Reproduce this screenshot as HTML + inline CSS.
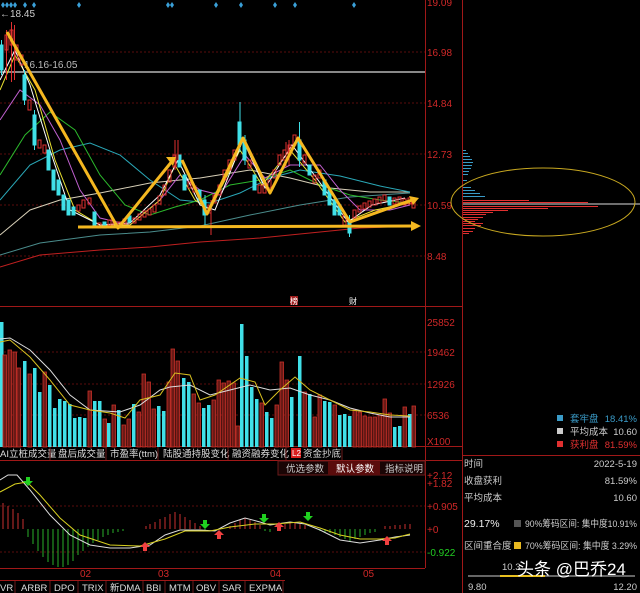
<!DOCTYPE html>
<html><head><meta charset="utf-8"><style>
html,body{margin:0;padding:0;background:#000;width:640px;height:593px;overflow:hidden}
svg{display:block}
text{font-family:"Liberation Sans","Noto Sans CJK SC",sans-serif}
</style></head><body>
<svg width="640" height="593" viewBox="0 0 640 593" xmlns="http://www.w3.org/2000/svg">
<rect width="640" height="593" fill="#000"/>
<g stroke="#5a0d0d" stroke-width="1" stroke-dasharray="2,2">
<line x1="0" y1="52" x2="425" y2="52"/><line x1="0" y1="103" x2="425" y2="103"/><line x1="0" y1="154" x2="425" y2="154"/><line x1="0" y1="205" x2="425" y2="205"/><line x1="0" y1="256" x2="425" y2="256"/>
<line x1="0" y1="352" x2="425" y2="352"/><line x1="0" y1="384" x2="425" y2="384"/><line x1="0" y1="415" x2="425" y2="415"/>
<line x1="0" y1="506" x2="425" y2="506"/><line x1="0" y1="552" x2="425" y2="552"/>
</g>
<g stroke="#a01818" stroke-width="1">
<line x1="425.5" y1="0" x2="425.5" y2="568"/>
<line x1="462.5" y1="0" x2="462.5" y2="593"/>
<line x1="0" y1="306.5" x2="462" y2="306.5"/>
<line x1="0" y1="446.5" x2="462" y2="446.5"/>
<line x1="0" y1="460.5" x2="462" y2="460.5"/>
<line x1="0" y1="568.5" x2="425" y2="568.5"/>
<line x1="0" y1="580.5" x2="285" y2="580.5"/>
<line x1="462" y1="455.5" x2="640" y2="455.5"/>
</g>
<line x1="0" y1="72" x2="425" y2="72" stroke="#888" stroke-width="2"/>
<g fill="#d02828" font-size="10">
<text x="427" y="6">19.09</text><text x="427" y="56">16.98</text><text x="427" y="107">14.84</text><text x="427" y="158">12.73</text><text x="427" y="209">10.59</text><text x="427" y="260">8.48</text>
<text x="427" y="326">25852</text><text x="427" y="356">19462</text><text x="427" y="388">12926</text><text x="427" y="419">6536</text><text x="427" y="445">X100</text>
<text x="427" y="479">+2.12</text><text x="427" y="487">+1.82</text><text x="427" y="510">+0.905</text><text x="427" y="533">+0</text>
</g>
<text x="427" y="556" fill="#2c2" font-size="10">-0.922</text>
<g fill="#d02828" font-size="10"><text x="80" y="577">02</text><text x="158" y="577">03</text><text x="270" y="577">04</text><text x="363" y="577">05</text></g>
<text x="0" y="17" fill="#ccc" font-size="10">←18.45</text>
<text x="24" y="68" fill="#bbb" font-size="10" font-family="Liberation Mono">16.16-16.05</text>
<g fill="#3aa0d8">
<path d="M3 2l2 3-2 3-2-3z M7 2l2 3-2 3-2-3z M11 2l2 3-2 3-2-3z M15 2l2 3-2 3-2-3z M25 2l2 3-2 3-2-3z M34 2l2 3-2 3-2-3z M79 2l2 3-2 3-2-3z M168 2l2 3-2 3-2-3z M172 2l2 3-2 3-2-3z M216 2l2 3-2 3-2-3z M241 2l2 3-2 3-2-3z M275 2l2 3-2 3-2-3z M295 2l2 3-2 3-2-3z M354 2l2 3-2 3-2-3z"/>
</g>
<g fill="none" stroke-width="1">
<polyline stroke="#c02020" points="0,267 40,255 100,250 150,247 200,242 260,238 320,232 360,228 415,226"/>
<polyline stroke="#4a8c8c" points="0,255 40,243 100,235 150,232 200,226 250,215 300,205 350,197 410,193"/>
<polyline stroke="#d8d0b8" points="0,235 30,210 60,200 100,193 150,183 200,178 250,170 290,178 330,188 370,192 410,192"/>
<polyline stroke="#2aa8b8" points="0,200 30,165 60,150 90,143 120,155 150,180 180,200 210,203 240,193 270,178 300,170 340,176 380,186 410,192"/>
<polyline stroke="#2cb82c" points="0,175 25,135 50,112 75,130 100,175 125,205 150,215 175,207 200,200 230,185 260,180 290,170 320,185 350,195 380,200 410,203"/>
<polyline stroke="#c060d0" points="0,120 20,90 40,105 60,140 80,190 100,218 130,225 160,200 180,175 200,190 220,195 245,155 265,178 290,165 320,165 340,190 360,210 390,210 410,205"/>
<polyline stroke="#e8e030" points="0,90 15,55 35,90 55,160 75,210 100,225 130,225 160,200 175,165 195,200 210,210 240,150 262,185 290,150 315,180 345,222 375,210 410,203"/>
<polyline stroke="#fff" points="0,80 15,50 30,85 50,150 70,210 100,225 130,223 160,195 178,160 200,205 215,210 243,140 265,188 292,145 318,180 348,222 372,205 405,198"/>
</g>
<g stroke-width="1">
<g fill="#40e0e8" stroke="#40e0e8">
<rect x="0" y="45" width="3" height="25"/><rect x="23" y="75" width="3" height="25"/><rect x="33" y="115" width="3" height="30"/><rect x="47" y="150" width="3" height="20"/><rect x="52" y="170" width="3" height="20"/><rect x="57" y="180" width="3" height="15"/><rect x="62" y="195" width="3" height="15"/><rect x="67" y="200" width="3" height="15"/><rect x="72" y="207" width="3" height="8"/><rect x="93" y="212" width="3" height="13"/><rect x="103" y="222" width="3" height="6"/><rect x="128" y="216" width="3" height="6"/><rect x="178" y="155" width="3" height="12"/><rect x="183" y="175" width="3" height="15"/><rect x="198" y="190" width="3" height="10"/><rect x="203" y="200" width="3" height="15"/><rect x="238" y="122" width="3" height="23"/><rect x="243" y="140" width="3" height="20"/><rect x="253" y="175" width="3" height="15"/><rect x="298" y="140" width="3" height="20"/><rect x="308" y="165" width="3" height="10"/><rect x="323" y="180" width="3" height="15"/><rect x="328" y="190" width="3" height="15"/><rect x="333" y="200" width="3" height="15"/><rect x="338" y="205" width="3" height="10"/><rect x="348" y="222" width="3" height="11"/><rect x="388" y="197" width="3" height="8"/>
</g>
<g stroke="#40e0e8"><path d="M1.5 40v35M24.5 70v35M34.5 110v40M240 102v50M245 135v30M299.5 122v45M349.5 215v22M205 195v30"/></g>
<g fill="none" stroke="#e03030">
<rect x="5" y="35" width="3" height="15"/><rect x="10" y="30" width="3" height="15"/><rect x="15" y="45" width="3" height="15"/><rect x="20" y="55" width="3" height="10"/><rect x="28" y="100" width="3" height="10"/><rect x="38" y="140" width="3" height="8"/><rect x="43" y="145" width="3" height="8"/><rect x="77" y="205" width="3" height="6"/><rect x="82" y="200" width="3" height="8"/><rect x="88" y="198" width="3" height="6"/><rect x="98" y="223" width="3" height="5"/><rect x="108" y="220" width="3" height="5"/><rect x="113" y="222" width="3" height="5"/><rect x="118" y="222" width="3" height="5"/><rect x="123" y="219" width="3" height="5"/><rect x="133" y="218" width="3" height="5"/><rect x="138" y="214" width="3" height="6"/><rect x="143" y="211" width="3" height="6"/><rect x="148" y="209" width="3" height="6"/><rect x="153" y="205" width="3" height="7"/><rect x="158" y="196" width="3" height="8"/><rect x="163" y="185" width="3" height="10"/><rect x="168" y="170" width="3" height="12"/><rect x="173" y="155" width="3" height="12"/><rect x="188" y="182" width="3" height="6"/><rect x="193" y="186" width="3" height="6"/><rect x="208" y="205" width="3" height="8"/><rect x="213" y="195" width="3" height="8"/><rect x="218" y="185" width="3" height="10"/><rect x="223" y="170" width="3" height="10"/><rect x="228" y="160" width="3" height="10"/><rect x="233" y="150" width="3" height="10"/><rect x="248" y="160" width="3" height="8"/><rect x="258" y="185" width="3" height="8"/><rect x="263" y="185" width="3" height="8"/><rect x="268" y="180" width="3" height="8"/><rect x="273" y="170" width="3" height="8"/><rect x="278" y="155" width="3" height="10"/><rect x="283" y="150" width="3" height="10"/><rect x="288" y="145" width="3" height="10"/><rect x="293" y="135" width="3" height="10"/><rect x="303" y="155" width="3" height="8"/><rect x="313" y="175" width="3" height="8"/><rect x="318" y="170" width="3" height="8"/><rect x="343" y="215" width="3" height="10"/><rect x="353" y="210" width="3" height="8"/><rect x="358" y="206" width="3" height="6"/><rect x="363" y="203" width="3" height="6"/><rect x="368" y="201" width="3" height="6"/><rect x="373" y="199" width="3" height="6"/><rect x="378" y="197" width="3" height="6"/><rect x="383" y="195" width="3" height="6"/><rect x="393" y="198" width="3" height="6"/><rect x="398" y="197" width="3" height="6"/><rect x="403" y="199" width="3" height="6"/><rect x="408" y="198" width="3" height="6"/><rect x="412" y="202" width="3" height="6"/>
</g>
<g stroke="#e03030"><path d="M11.5 22v60M14.5 25v55M6.5 30v50M175 140v30M178 140v20M286 142v25M289 140v25M211 200v35"/></g>
</g>
<g fill="none" stroke="#f5b820" stroke-width="3" stroke-linejoin="round">
<polyline points="7,32 118,228 173,160"/>
<polyline points="182,160 207,214 243,138 270,193 298,138 350,222 412,200"/>
<line x1="78" y1="227" x2="415" y2="226"/>
</g>
<g fill="#f5b820"><path d="M176,157 l-10,0 l7,9z M421,226 l-10,-5 l0,10z M419,198 l-10,-2 l4,9z"/></g>
<rect x="290" y="296" width="8" height="9" fill="#a02020"/><text x="290" y="304" fill="#fff" font-size="8">榜</text>
<text x="349" y="304" fill="#fff" font-size="8">财</text>
<g fill="#3a9bc8">
<rect x="463" y="150" width="3" height="1"/><rect x="463" y="153" width="5" height="1"/><rect x="463" y="156" width="7" height="1"/><rect x="463" y="159" width="9" height="1"/><rect x="463" y="162" width="10" height="1"/><rect x="463" y="165" width="9" height="1"/><rect x="463" y="168" width="8" height="1"/><rect x="463" y="171" width="6" height="1"/><rect x="463" y="174" width="5" height="1"/><rect x="463" y="180" width="4" height="1"/><rect x="463" y="187" width="8" height="1"/><rect x="463" y="190" width="12" height="1"/><rect x="463" y="193" width="17" height="1"/><rect x="463" y="196" width="22" height="1"/>
</g>
<g fill="#e03030">
<rect x="463" y="200" width="66" height="1"/><rect x="463" y="202" width="125" height="1"/><rect x="463" y="206" width="135" height="1"/><rect x="463" y="208" width="85" height="1"/><rect x="463" y="210" width="45" height="1"/><rect x="463" y="212" width="30" height="1"/><rect x="463" y="214" width="23" height="1"/><rect x="463" y="217" width="20" height="1"/><rect x="463" y="219" width="15" height="1"/><rect x="463" y="221" width="12" height="1"/><rect x="463" y="223" width="20" height="1"/><rect x="463" y="225" width="18" height="1"/><rect x="463" y="228" width="12" height="1"/><rect x="463" y="231" width="10" height="1"/><rect x="463" y="233" width="6" height="1"/>
</g>
<line x1="463" y1="204" x2="640" y2="204" stroke="#ddd" stroke-width="1"/>
<ellipse cx="543" cy="202" rx="92" ry="34" fill="none" stroke="#c8a820" stroke-width="1"/>
<g fill="#40e0e8">
<rect x="0" y="322" width="3.5" height="125"/><rect x="23" y="361" width="3.5" height="86"/><rect x="33" y="368" width="3.5" height="79"/><rect x="38" y="392" width="3.5" height="55"/><rect x="48" y="385" width="3.5" height="62"/><rect x="53" y="408" width="3.5" height="39"/><rect x="58" y="399" width="3.5" height="48"/><rect x="63" y="401" width="3.5" height="46"/><rect x="68" y="404" width="3.5" height="43"/><rect x="73" y="418" width="3.5" height="29"/><rect x="78" y="417" width="3.5" height="30"/><rect x="83" y="418" width="3.5" height="29"/><rect x="93" y="401" width="3.5" height="46"/><rect x="98" y="401" width="3.5" height="46"/><rect x="107" y="423" width="3.5" height="24"/><rect x="117" y="410" width="3.5" height="37"/><rect x="132" y="404" width="3.5" height="43"/><rect x="157" y="406" width="3.5" height="41"/><rect x="162" y="411" width="3.5" height="36"/><rect x="182" y="378" width="3.5" height="69"/><rect x="187" y="382" width="3.5" height="65"/><rect x="202" y="408" width="3.5" height="39"/><rect x="207" y="405" width="3.5" height="42"/><rect x="240" y="324" width="3.5" height="123"/><rect x="245" y="356" width="3.5" height="91"/><rect x="250" y="387" width="3.5" height="60"/><rect x="255" y="399" width="3.5" height="48"/><rect x="265" y="412" width="3.5" height="35"/><rect x="270" y="418" width="3.5" height="29"/><rect x="290" y="397" width="3.5" height="50"/><rect x="298" y="356" width="3.5" height="91"/><rect x="308" y="394" width="3.5" height="53"/><rect x="323" y="401" width="3.5" height="46"/><rect x="328" y="402" width="3.5" height="45"/><rect x="338" y="415" width="3.5" height="32"/><rect x="343" y="414" width="3.5" height="33"/><rect x="348" y="416" width="3.5" height="31"/><rect x="393" y="427" width="3.5" height="20"/><rect x="398" y="426" width="3.5" height="21"/><rect x="408" y="414" width="3.5" height="33"/>
</g>
<g fill="#6a1a16" stroke="#c83028" stroke-width="0.8">
<rect x="3" y="355" width="3.5" height="92"/><rect x="8" y="350" width="3.5" height="97"/><rect x="13" y="352" width="3.5" height="95"/><rect x="17" y="368" width="3.5" height="79"/><rect x="28" y="374" width="3.5" height="73"/><rect x="43" y="372" width="3.5" height="75"/><rect x="88" y="391" width="3.5" height="56"/><rect x="103" y="419" width="3.5" height="28"/><rect x="112" y="405" width="3.5" height="42"/><rect x="122" y="425" width="3.5" height="22"/><rect x="127" y="419" width="3.5" height="28"/><rect x="137" y="412" width="3.5" height="35"/><rect x="142" y="374" width="3.5" height="73"/><rect x="147" y="382" width="3.5" height="65"/><rect x="152" y="409" width="3.5" height="38"/><rect x="167" y="382" width="3.5" height="65"/><rect x="171" y="349" width="3.5" height="98"/><rect x="176" y="361" width="3.5" height="86"/><rect x="192" y="394" width="3.5" height="53"/><rect x="197" y="403" width="3.5" height="44"/><rect x="212" y="400" width="3.5" height="47"/><rect x="217" y="380" width="3.5" height="67"/><rect x="222" y="383" width="3.5" height="64"/><rect x="227" y="381" width="3.5" height="66"/><rect x="232" y="383" width="3.5" height="64"/><rect x="236" y="426" width="3.5" height="21"/><rect x="260" y="403" width="3.5" height="44"/><rect x="275" y="405" width="3.5" height="42"/><rect x="280" y="362" width="3.5" height="85"/><rect x="285" y="380" width="3.5" height="67"/><rect x="303" y="392" width="3.5" height="55"/><rect x="313" y="417" width="3.5" height="30"/><rect x="318" y="395" width="3.5" height="52"/><rect x="333" y="405" width="3.5" height="42"/><rect x="353" y="410" width="3.5" height="37"/><rect x="358" y="412" width="3.5" height="35"/><rect x="363" y="416" width="3.5" height="31"/><rect x="368" y="417" width="3.5" height="30"/><rect x="373" y="417" width="3.5" height="30"/><rect x="378" y="415" width="3.5" height="32"/><rect x="383" y="399" width="3.5" height="48"/><rect x="388" y="413" width="3.5" height="34"/><rect x="403" y="407" width="3.5" height="40"/><rect x="412" y="406" width="3.5" height="41"/>
</g>
<g fill="none" stroke-width="1">
<polyline stroke="#ddd" points="0,339 10,338 30,350 50,370 70,395 90,410 120,412 140,405 160,390 170,387 190,385 210,395 230,390 250,385 270,390 290,388 310,395 330,400 350,408 370,413 390,417 410,417"/>
<polyline stroke="#d8c020" points="0,342 10,340 30,357 50,380 70,405 90,410 110,413 125,418 140,400 160,395 175,373 190,375 200,400 215,395 240,378 255,382 265,405 280,390 295,377 310,390 330,400 350,410 370,412 390,415 410,416"/>
</g>
<g font-size="9.5" fill="#ddd">
<text x="0" y="457">AI立桩成交量</text><text x="58" y="457">盘后成交量</text><text x="110" y="457">市盈率(ttm)</text><text x="163" y="457">陆股通持股变化</text><text x="232" y="457">融资融券变化</text><text x="303" y="457">资金抄底</text>
</g>
<g stroke="#6a1a1a"><path d="M50 447v13M106 447v13M158 447v13M228 447v13M286 447v13M342 447v13"/></g>
<rect x="291" y="448" width="10" height="10" fill="#d82020"/><text x="292" y="456" fill="#fff" font-size="8">L2</text>
<rect x="278" y="461" width="147" height="14" fill="#1a0505" stroke="#6a1a1a"/>
<rect x="328" y="461" width="52" height="14" fill="#5a0c0c"/>
<g font-size="9.5" fill="#ccc"><text x="286" y="472">优选参数</text><text x="336" y="472" fill="#fff">默认参数</text><text x="385" y="472">指标说明</text></g>
<g stroke="#c83030" stroke-width="1"><path d="M3 529v-26M8 529v-23M13 529v-20M18 529v-16M23 529v-10M146 529v-3M150 529v-5M155 529v-7M160 529v-10M165 529v-12M170 529v-15M175 529v-17M180 529v-15M185 529v-12M190 529v-9M195 529v-6M200 529v-3M230 529v-3M235 529v-6M240 529v-9M245 529v-11M250 529v-9M255 529v-7M260 529v-4M280 529v-3M285 529v-5M290 529v-6M295 529v-6M300 529v-5M305 529v-4M385 529v-3M390 529v-3M395 529v-4M400 529v-4M405 529v-5M410 529v-5"/></g>
<g stroke="#2ab02a" stroke-width="1"><path d="M28 529v8M33 529v15M38 529v22M43 529v28M48 529v33M53 529v36M58 529v38M63 529v38M68 529v36M73 529v32M78 529v26M83 529v22M88 529v18M93 529v14M98 529v11M103 529v8M108 529v6M113 529v4M118 529v3M123 529v2M205 529v2M265 529v2M270 529v3M320 529v2M325 529v3M330 529v4M335 529v6M340 529v8M345 529v10M350 529v12M355 529v10M360 529v8M365 529v6M370 529v4M375 529v3"/></g>
<g fill="none" stroke-width="1">
<polyline stroke="#ddd" points="0,480 8,475 17,475 30,490 50,515 70,535 90,545 110,548 130,548 150,545 165,535 180,530 200,530 215,531 230,523 245,518 260,522 270,525 290,522 305,524 320,530 340,540 360,543 380,540 395,537 410,535"/>
<polyline stroke="#d8d020" points="0,492 15,484 27,482 40,495 60,518 80,535 110,545 140,546 165,539 185,531 210,531 230,527 255,524 275,524 300,522 320,528 340,535 360,539 380,539 395,538 410,534"/>
</g>
<g fill="#20d020"><path d="M26 477h4v4h3l-5 5-5-5h3z M203 520h4v4h3l-5 5-5-5h3z M262 514h4v4h3l-5 5-5-5h3z M306 512h4v4h3l-5 5-5-5h3z"/></g>
<g fill="#f04040"><path d="M147 551h-4v-4h-3l5-5 5 5h-3z M221 539h-4v-4h-3l5-5 5 5h-3z M281 531h-4v-4h-3l5-5 5 5h-3z M389 545h-4v-4h-3l5-5 5 5h-3z"/></g>
<g font-size="9.5" fill="#ddd"><text x="0" y="591">VR</text><text x="21" y="591">ARBR</text><text x="54" y="591">DPO</text><text x="82" y="591">TRIX</text><text x="110" y="591">新DMA</text><text x="146" y="591">BBI</text><text x="169" y="591">MTM</text><text x="196" y="591">OBV</text><text x="222" y="591">SAR</text><text x="249" y="591">EXPMA</text></g>
<g stroke="#6a1a1a"><path d="M15 581v12M50 581v12M78 581v12M106 581v12M143 581v12M165 581v12M193 581v12M219 581v12M245 581v12M283 581v12"/></g>
<rect x="557" y="415" width="6" height="6" fill="#3a9bc8"/><rect x="557" y="428" width="6" height="6" fill="#ccc"/><rect x="557" y="441" width="6" height="6" fill="#e03030"/>
<g font-size="9.5">
<text x="570" y="422" fill="#3a9bc8">套牢盘</text><text x="637" y="422" fill="#3a9bc8" text-anchor="end">18.41%</text>
<text x="570" y="435" fill="#ccc">平均成本</text><text x="637" y="435" fill="#ccc" text-anchor="end">10.60</text>
<text x="570" y="448" fill="#e03030">获利盘</text><text x="637" y="448" fill="#e03030" text-anchor="end">81.59%</text>
<text x="464" y="467" fill="#ccc">时间</text><text x="637" y="467" fill="#ccc" text-anchor="end">2022-5-19</text>
<text x="464" y="484" fill="#ccc">收盘获利</text><text x="637" y="484" fill="#ccc" text-anchor="end">81.59%</text>
<text x="464" y="501" fill="#ccc">平均成本</text><text x="637" y="501" fill="#ccc" text-anchor="end">10.60</text>
<text x="464" y="527" fill="#eee" font-size="10.5">29.17%</text>
<text x="525" y="527" fill="#ccc" textLength="112" lengthAdjust="spacingAndGlyphs">90%筹码区间: 集中度10.91%</text>
<text x="464" y="549" fill="#ccc">区间重合度</text>
<text x="525" y="549" fill="#ccc" textLength="112" lengthAdjust="spacingAndGlyphs">70%筹码区间: 集中度 3.29%</text>
</g>
<rect x="514" y="520" width="7" height="7" fill="#555"/><rect x="514" y="542" width="7" height="7" fill="#e8b820"/>
<line x1="468" y1="576" x2="635" y2="576" stroke="#666" stroke-width="2"/>
<line x1="500" y1="576" x2="545" y2="576" stroke="#e8c020" stroke-width="2"/>
<text x="502" y="570" fill="#ccc" font-size="9.5">10.3</text>
<text x="517" y="575" fill="#fff" font-size="17">头条 @巴乔24</text>
<text x="468" y="590" fill="#ccc" font-size="9.5">9.80</text><text x="637" y="590" fill="#ccc" font-size="9.5" text-anchor="end">12.20</text>
</svg>
</body></html>
